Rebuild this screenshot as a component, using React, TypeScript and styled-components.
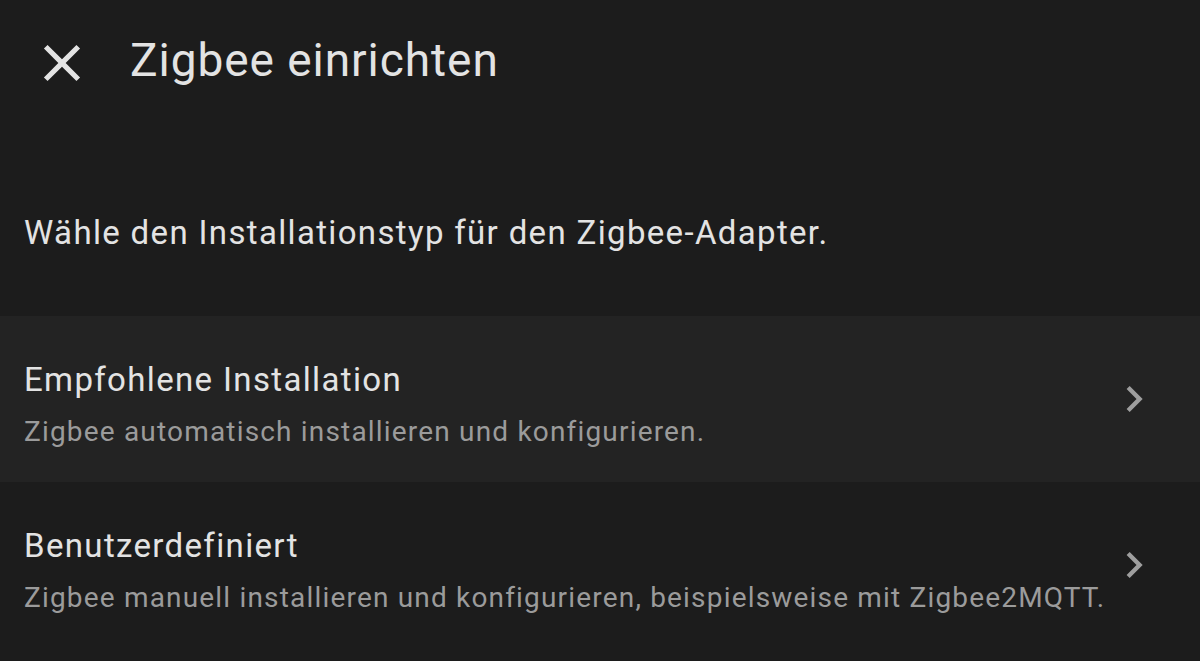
import React from 'react';
import styled, { createGlobalStyle } from 'styled-components';

const Global = createGlobalStyle`
  html, body { margin: 0; padding: 0; background: #1c1c1c; }
  body { font-family: Roboto, "Noto Sans", sans-serif; -webkit-font-smoothing: antialiased; }
`;

const Dialog = styled.div`
  width: 1200px;
  height: 661px;
  background: #1c1c1c;
  overflow: hidden;
  display: flex;
  flex-direction: column;
`;

const Header = styled.header`
  display: flex;
  align-items: center;
  height: 126px;
  padding-left: 31px;
  gap: 37px;
`;

const CloseButton = styled.button`
  width: 62px;
  height: 62px;
  border: 0;
  padding: 0;
  background: none;
  color: #e3e3e3;
  display: flex;
  cursor: pointer;
`;

const Title = styled.h2`
  margin: 0 0 7px;
  font-size: 46px;
  font-weight: 400;
  line-height: 1;
  letter-spacing: 0.95px;
  color: #e3e3e3;
`;

const Description = styled.p`
  margin: 83px 0 59px;
  padding: 0 24px;
  font-size: 33px;
  line-height: 48px;
  letter-spacing: 1.34px;
  color: #e3e3e3;
`;

const List = styled.div`
  display: flex;
  flex-direction: column;
`;

const Row = styled.div<{ $active?: boolean }>`
  display: flex;
  align-items: center;
  height: 166px;
  padding: 0 40px 0 24px;
  background: ${(p) => (p.$active ? '#232323' : 'transparent')};
  cursor: pointer;
`;

const RowText = styled.div`
  flex: 1;
  display: flex;
  flex-direction: column;
  gap: 12px;
  align-self: flex-start;
  padding-top: 44px;
`;

const RowTitle = styled.span`
  font-size: 33px;
  line-height: 40px;
  letter-spacing: 1.35px;
  color: #e3e3e3;
`;

const RowSub = styled.span`
  font-size: 28px;
  line-height: 40px;
  letter-spacing: 1.18px;
  color: #9b9b9b;
`;

const Chevron = styled.svg`
  width: 52px;
  height: 52px;
  flex: none;
  color: #9e9e9e;
`;

const ChevronIcon = () => (
  <Chevron viewBox="0 0 24 24">
    <path fill="currentColor" d="M8.59,16.58L13.17,12L8.59,7.41L10,6L16,12L10,18L8.59,16.58Z" />
  </Chevron>
);

export default function App() {
  return (
    <>
      <Global />
      <Dialog>
        <Header>
          <CloseButton aria-label="Schließen">
            <svg viewBox="0 0 24 24" width="62" height="62">
              <path
                fill="currentColor"
                d="M19,6.41L17.59,5L12,10.59L6.41,5L5,6.41L10.59,12L5,17.59L6.41,19L12,13.41L17.59,19L19,17.59L13.41,12L19,6.41Z"
              />
            </svg>
          </CloseButton>
          <Title>Zigbee einrichten</Title>
        </Header>
        <Description>Wähle den Installationstyp für den Zigbee-Adapter.</Description>
        <List>
          <Row $active>
            <RowText>
              <RowTitle>Empfohlene Installation</RowTitle>
              <RowSub>Zigbee automatisch installieren und konfigurieren.</RowSub>
            </RowText>
            <ChevronIcon />
          </Row>
          <Row>
            <RowText>
              <RowTitle>Benutzerdefiniert</RowTitle>
              <RowSub>Zigbee manuell installieren und konfigurieren, beispielsweise mit Zigbee2MQTT.</RowSub>
            </RowText>
            <ChevronIcon />
          </Row>
        </List>
      </Dialog>
    </>
  );
}
